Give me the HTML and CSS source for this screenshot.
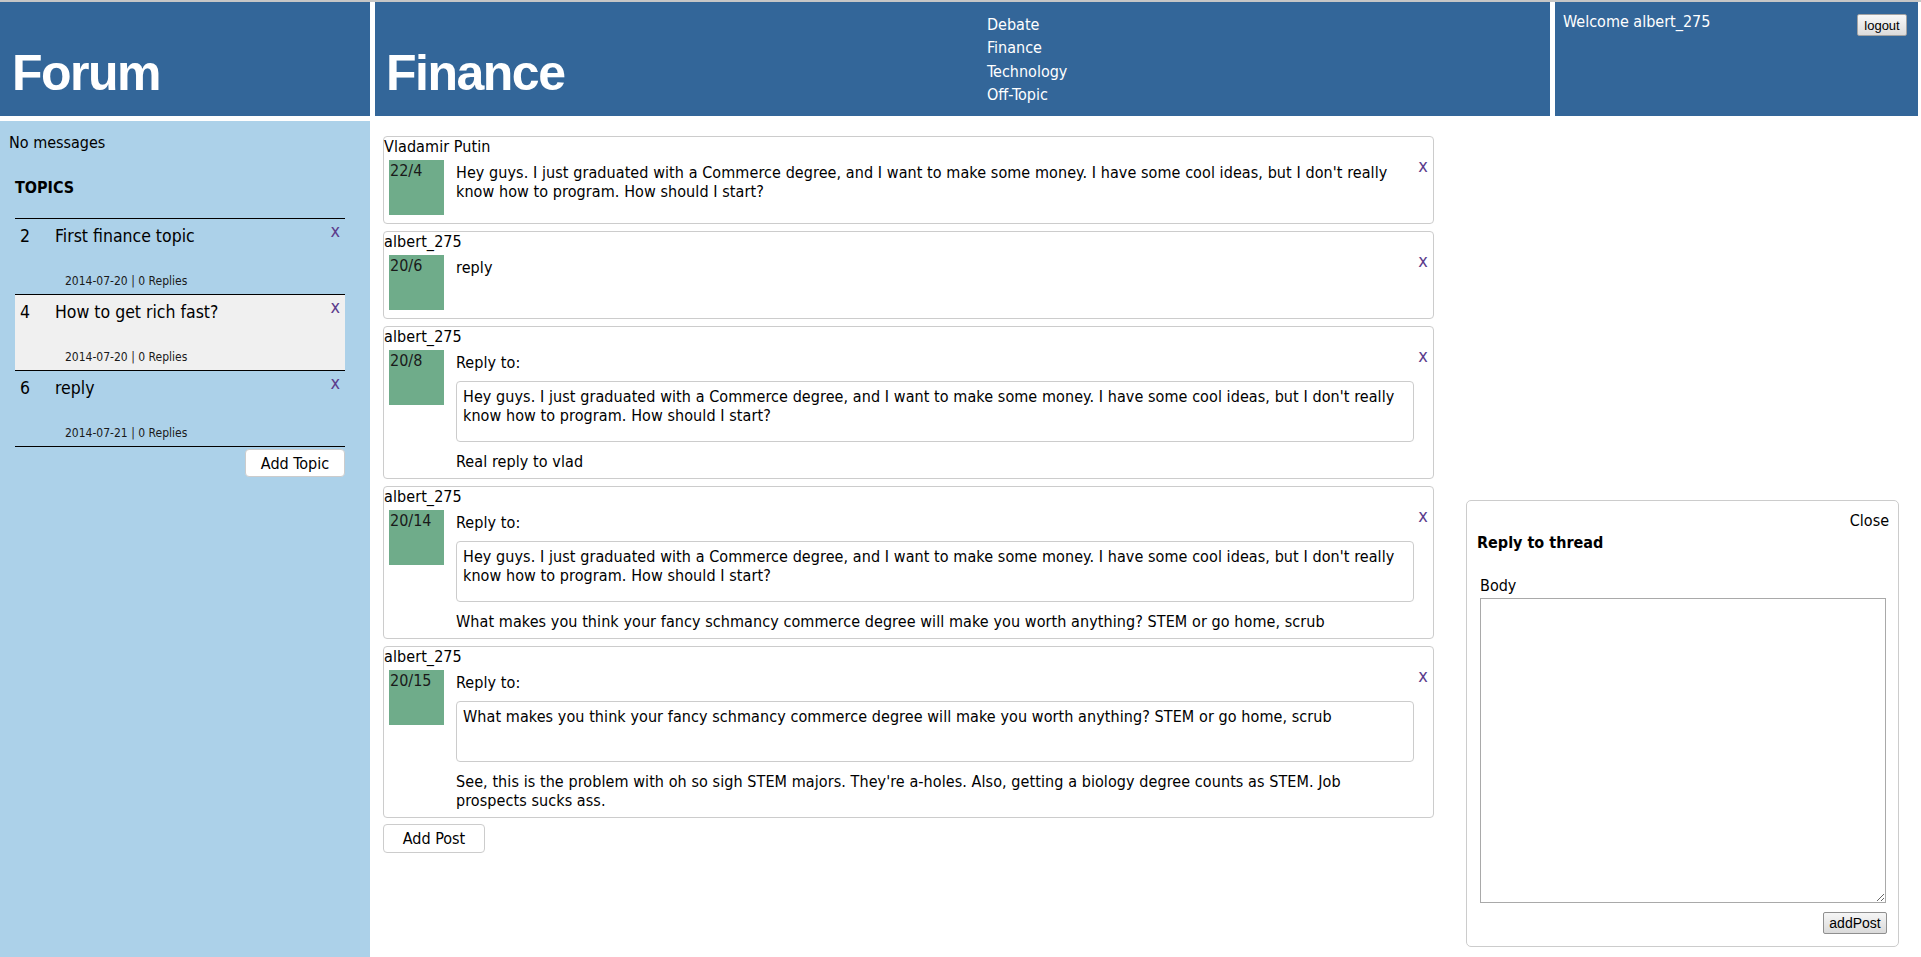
FILE: index.html
```html
<!DOCTYPE html>
<html lang="en">
<head>
<meta charset="utf-8">
<title>Forum - Finance</title>
<link rel="stylesheet" href="styles.css">
</head>
<body>
<div class="page">
  <header class="hcell brand">
    <h1 class="big-title">Forum</h1>
  </header>
  <header class="hcell section">
    <div class="section-titlebox"><h1 class="big-title">Finance</h1></div>
    <ul class="nav">
      <li>Debate</li>
      <li>Finance</li>
      <li>Technology</li>
      <li>Off-Topic</li>
    </ul>
  </header>
  <header class="hcell user">
    <span class="welcome">Welcome albert_275</span>
    <button class="logout">logout</button>
  </header>

  <aside class="sidebar">
    <p class="status">No messages</p>
    <div class="topics">
      <h3 class="topics-title">TOPICS</h3>
      <ul class="topic-list">
        <li class="topic">
          <span class="topic-num">2</span>
          <div class="topic-main">
            <span class="topic-title">First finance topic</span>
            <span class="topic-meta">2014-07-20 | 0 Replies</span>
          </div>
          <span class="del topic-del">x</span>
        </li>
        <li class="topic active">
          <span class="topic-num">4</span>
          <div class="topic-main">
            <span class="topic-title">How to get rich fast?</span>
            <span class="topic-meta">2014-07-20 | 0 Replies</span>
          </div>
          <span class="del topic-del">x</span>
        </li>
        <li class="topic">
          <span class="topic-num">6</span>
          <div class="topic-main">
            <span class="topic-title">reply</span>
            <span class="topic-meta">2014-07-21 | 0 Replies</span>
          </div>
          <span class="del topic-del">x</span>
        </li>
      </ul>
      <div class="add-topic-row"><button class="btn add-topic">Add Topic</button></div>
    </div>
  </aside>

  <main class="content">
    <div class="post">
      <div class="author">Vladamir Putin</div>
      <div class="post-body">
        <div class="score">22/4</div>
        <div class="post-text">Hey guys. I just graduated with a Commerce degree, and I want to make some money. I have some cool ideas, but I don't really know how to program. How should I start?</div>
        <span class="del post-del">x</span>
      </div>
    </div>
    <div class="post">
      <div class="author">albert_275</div>
      <div class="post-body">
        <div class="score">20/6</div>
        <div class="post-text">reply</div>
        <span class="del post-del">x</span>
      </div>
    </div>
    <div class="post">
      <div class="author">albert_275</div>
      <div class="post-body">
        <div class="score">20/8</div>
        <div class="post-text">
          <div class="reply-label">Reply to:</div>
          <div class="quote">Hey guys. I just graduated with a Commerce degree, and I want to make some money. I have some cool ideas, but I don't really know how to program. How should I start?</div>
          <div>Real reply to vlad</div>
        </div>
        <span class="del post-del">x</span>
      </div>
    </div>
    <div class="post">
      <div class="author">albert_275</div>
      <div class="post-body">
        <div class="score">20/14</div>
        <div class="post-text">
          <div class="reply-label">Reply to:</div>
          <div class="quote">Hey guys. I just graduated with a Commerce degree, and I want to make some money. I have some cool ideas, but I don't really know how to program. How should I start?</div>
          <div>What makes you think your fancy schmancy commerce degree will make you worth anything? STEM or go home, scrub</div>
        </div>
        <span class="del post-del">x</span>
      </div>
    </div>
    <div class="post">
      <div class="author">albert_275</div>
      <div class="post-body">
        <div class="score">20/15</div>
        <div class="post-text">
          <div class="reply-label">Reply to:</div>
          <div class="quote">What makes you think your fancy schmancy commerce degree will make you worth anything? STEM or go home, scrub</div>
          <div>See, this is the problem with oh so sigh STEM majors. They're a-holes. Also, getting a biology degree counts as STEM. Job prospects sucks ass.</div>
        </div>
        <span class="del post-del">x</span>
      </div>
    </div>
    <button class="btn add-post">Add Post</button>
  </main>

  <div class="rightcol"></div>

  <div class="reply-dialog">
    <div class="close">Close</div>
    <h4 class="dialog-title">Reply to thread</h4>
    <div class="field-label">Body</div>
    <textarea class="body-input"></textarea>
    <div class="dialog-actions"><button class="addpost">addPost</button></div>
  </div>
</div>
</body>
</html>
```

FILE: styles.css
```css
html, body {
  margin: 0;
  padding: 0;
}

body {
  border-top: 2px solid #c6c6c6;
  font-family: "DejaVu Sans Condensed", "DejaVu Sans", sans-serif;
  font-size: 16px;
  line-height: 19px;
  color: #000;
  background: #fff;
  overflow: hidden;
}

.page {
  position: relative;
  display: grid;
  grid-template-columns: 370px 1175px 363px;
  grid-template-rows: 114px 836px;
  gap: 5px;
}

.hcell {
  background: #336699;
  color: #fff;
  box-sizing: border-box;
}

.brand {
  display: flex;
  align-items: flex-end;
  padding: 0 0 18px 12px;
}

.big-title {
  margin: 0;
  font-family: "Liberation Sans", Arial, sans-serif;
  font-weight: bold;
  font-size: 50px;
  line-height: 50px;
  letter-spacing: -1.5px;
}

.section {
  display: flex;
}

.section-titlebox {
  box-sizing: border-box;
  width: 612px;
  display: flex;
  align-items: flex-end;
  padding: 0 0 18px 11px;
}

.nav {
  list-style: none;
  margin: 0;
  padding: 11px 0 0;
  line-height: 23.3px;
}

.user {
  display: flex;
  justify-content: space-between;
  align-items: flex-start;
  padding: 10px 11px 0 8px;
}

.logout {
  margin-top: 2px;
  width: 50px;
  height: 22px;
  padding: 0;
  font-family: "Liberation Sans", Arial, sans-serif;
  font-size: 13px;
  color: #000;
  border: 1px solid #a3a3a3;
  border-radius: 2px;
  background: linear-gradient(#f8f8f8, #dcdcdc);
}

/* Sidebar */
.sidebar {
  background: #acd1e9;
  padding: 12px 0 0 9px;
}

.status {
  margin: 0;
}

.topics {
  margin: 26px 0 0 6px;
  width: 330px;
}

.topics-title {
  margin: 0 0 21px;
  font-size: 16px;
  line-height: 19px;
  font-weight: bold;
}

.topic-list {
  list-style: none;
  margin: 0;
  padding: 0;
  border-bottom: 1px solid #000;
}

.topic {
  display: flex;
  align-items: flex-start;
  height: 75px;
  padding: 0 5px;
  border-top: 1px solid #000;
}

.topic.active {
  background: #f0f0f0;
}

.topic-num {
  width: 35px;
  padding-top: 6px;
  font-size: 17.5px;
  line-height: 22px;
}

.topic-main {
  flex: 1;
  display: flex;
  flex-direction: column;
  padding-top: 6px;
}

.topic-title {
  font-size: 17.5px;
  line-height: 22px;
}

.topic-meta {
  margin-top: 27px;
  padding-left: 10px;
  font-size: 12px;
  line-height: 15px;
  color: #1a1a1a;
}

.del {
  color: #5c3c8c;
  font-size: 18px;
  line-height: 12px;
}

.topic-del {
  margin-top: 6px;
}

.add-topic-row {
  display: flex;
  justify-content: flex-end;
  margin-top: 2px;
}

.btn {
  background: #fff;
  border: 1px solid #cccccc;
  border-radius: 4px;
  font-family: "DejaVu Sans Condensed", "DejaVu Sans", sans-serif;
  font-size: 16px;
  color: #000;
  padding: 0;
}

.add-topic {
  width: 100px;
  height: 28px;
}

/* Posts */
.content {
  padding: 15px 0 0 8px;
  letter-spacing: 0.08px;
}

.post {
  width: 1051px;
  box-sizing: border-box;
  border: 1px solid #cccccc;
  border-radius: 4px;
  margin-bottom: 7px;
}

.author {
  line-height: 19px;
}

.post-body {
  display: flex;
  align-items: flex-start;
  margin-top: 4px;
  padding-bottom: 7px;
}

.score {
  box-sizing: border-box;
  width: 55px;
  height: 55px;
  margin: 0 0 1px 5px;
  padding: 1px 0 0 1px;
  background: #6fac8a;
  color: #1a1a1a;
  letter-spacing: 0;
}

.post-text {
  flex: 1;
  margin-left: 12px;
  padding-top: 3px;
}

.post-del {
  margin: 0 5px 0 4px;
}

.reply-label {
  margin-bottom: 9px;
}

.quote {
  box-sizing: border-box;
  height: 61px;
  padding: 5px 6px;
  margin-bottom: 10px;
  border: 1px solid #cccccc;
  border-radius: 4px;
}

.add-post {
  width: 102px;
  height: 29px;
  margin-top: -1px;
}

/* Reply dialog */
.reply-dialog {
  position: absolute;
  left: 1466px;
  top: 498px;
  width: 433px;
  height: 447px;
  box-sizing: border-box;
  padding: 10px 9px 0 10px;
  background: #fff;
  border: 1px solid #cccccc;
  border-radius: 5px;
}

.close {
  text-align: right;
}

.dialog-title {
  margin: 3px 0 0;
  font-size: 16px;
  line-height: 19px;
  font-weight: bold;
}

.field-label {
  margin: 24px 0 0 3px;
}

.body-input {
  display: block;
  box-sizing: border-box;
  width: 406px;
  height: 305px;
  margin: 3px 0 0 3px;
  border: 1px solid #a9a9a9;
  resize: both;
}

.dialog-actions {
  display: flex;
  justify-content: flex-end;
  margin: 9px 2px 0 0;
}

.addpost {
  width: 64px;
  height: 22px;
  padding: 0;
  font-family: "Liberation Sans", Arial, sans-serif;
  font-size: 14px;
  color: #000;
  border: 1px solid #8f8f8f;
  border-radius: 2px;
  background: linear-gradient(#f6f6f6, #dadada);
}
```
